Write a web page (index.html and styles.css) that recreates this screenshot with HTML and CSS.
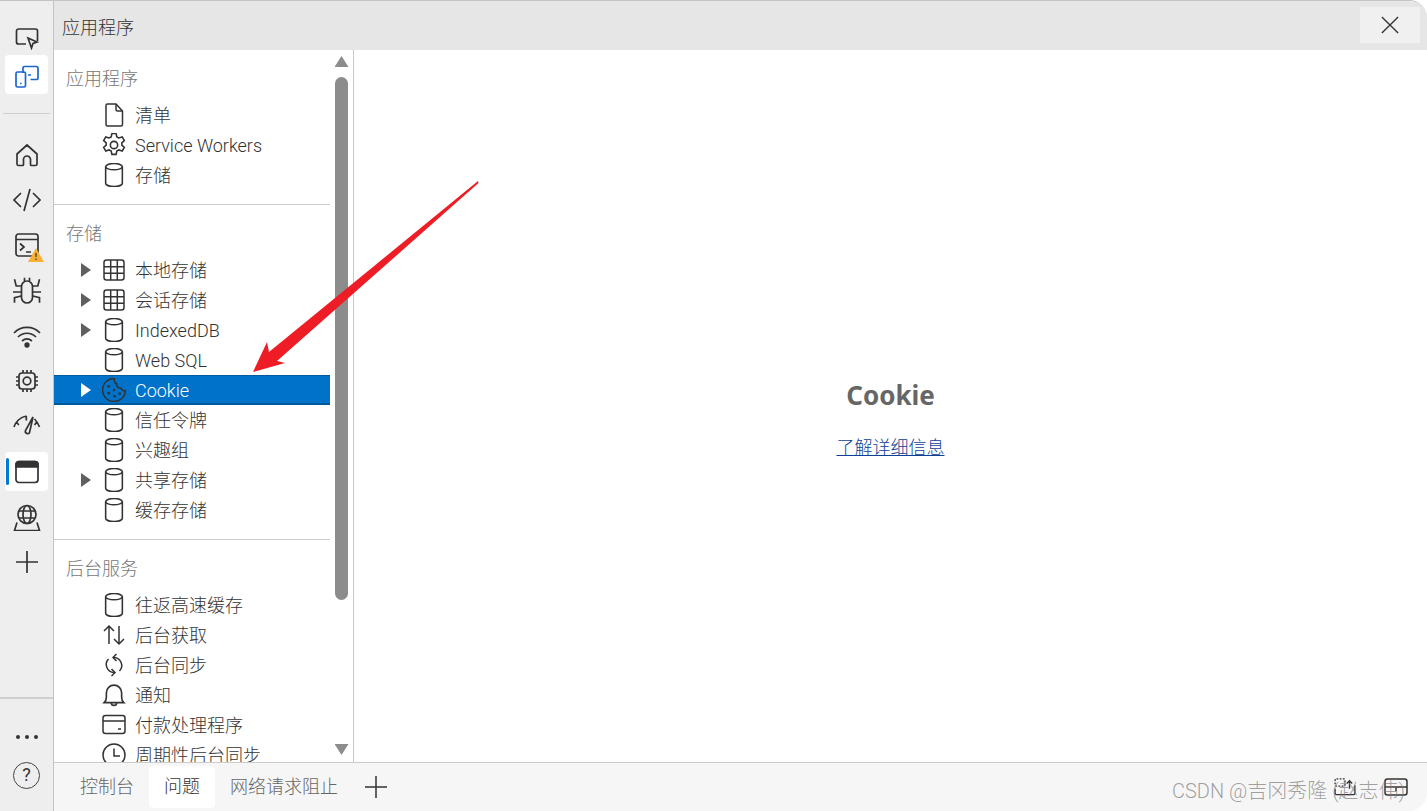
FILE: index.html
```html
<!DOCTYPE html>
<html lang="zh-CN">

<head>
    <meta charset="UTF-8">
    <title>应用程序</title>
    <link rel="stylesheet" href="styles.css">
</head>

<body>
    <svg class="defs" width="0" height="0">
        <symbol id="i-file" viewBox="0 0 24 24"><path d="M5.500 1h8.500l6.500 7v13.500a1.500 1.500 0 0 1-1.500 1.500h-13.500a1.500 1.500 0 0 1-1.500-1.500v-19a1.500 1.500 0 0 1 1.500-1.500z"/><path d="M14 1v5.500a1.500 1.500 0 0 0 1.500 1.500h5"/></symbol>
        <symbol id="i-gear" viewBox="0.500 0.500 23 23"><circle cx="12" cy="12" r="3.500"/><path d="M10 1h4l.7 3.200 2 1.100 3.200-1 2 3.400-2.400 2.200v2.200l2.400 2.200-2 3.400-3.200-1-2 1.100-.7 3.200h-4l-.7-3.200-2-1.100-3.200 1-2-3.400 2.400-2.200v-2.200l-2.400-2.200 2-3.400 3.200 1 2-1.100z"/></symbol>
        <symbol id="i-db" viewBox="0.500 0.500 23 23"><ellipse cx="12" cy="4" rx="8" ry="3"/><path d="M4 4v16c0 1.700 3.600 3 8 3s8-1.300 8-3v-16"/></symbol>
        <symbol id="i-grid" viewBox="0 0 24 24"><rect x="2" y="2" width="20" height="20" rx="2.500"/><path d="M8.700 2v20M15.300 2v20M2 8.700h20M2 15.300h20"/></symbol>
        <symbol id="i-cookie" viewBox="0.500 0.500 23 23"><path d="M12.500 1a11 11 0 1 0 10.500 11.500c-2.200.6-4-.5-4.500-2.500-2.500.3-4.300-1.400-4-4-1.800-.8-2.600-3-2-5z"/><g class="dots"><circle cx="7" cy="8.500" r="1.300"/><circle cx="12" cy="12" r="1.300"/><circle cx="7" cy="15" r="1.300"/><circle cx="12.500" cy="18" r="1.300"/><circle cx="17.500" cy="15.500" r="1.300"/></g></symbol>
        <symbol id="i-updown" viewBox="0 0 24 24"><path d="M7 21v-18M2 8l5-5 5 5M17 3v18M12 16l5 5 5-5"/></symbol>
        <symbol id="i-sync" viewBox="0 0 24 24"><path d="M12 4.500a8 8 0 0 1 5.500 13.500M12 19.500a8 8 0 0 1-5.500-13.500"/><path d="M14.500 1l-3.500 3.500 3.500 3.500M9.500 23l3.500-3.500-3.500-3.500"/></symbol>
        <symbol id="i-bell" viewBox="2 0.500 20 22"><path d="M3 18.500c1.500-1.500 2-3 2-5v-4a7 7 0 0 1 14 0v4c0 2 .5 3.500 2 5z"/><path d="M9.500 18.500a2.500 2.500 0 0 0 5 0"/></symbol>
        <symbol id="i-card" viewBox="0 0 24 24"><rect x="1" y="2.500" width="22" height="18" rx="2.500"/><path d="M1 8h22M16 16h3"/></symbol>
        <symbol id="i-clock" viewBox="0 0 24 24"><circle cx="12" cy="12" r="11"/><path d="M12 5.500v7.500h6"/></symbol>
    </svg>

    <div class="window">
        <!-- activity bar -->
        <nav class="activity">
            <div class="activity-top">
                <div class="tool">
                    <svg viewBox="0 0 24 24"><path d="M11 18h-7.500a2 2 0 0 1-2-2v-11a2 2 0 0 1 2-2h17a2 2 0 0 1 2 2v10"/><path d="M13 12l9 4-4 1.500-1.500 4.500z"/></svg>
                </div>
                <div class="tool tool-on">
                    <svg class="blue" viewBox="0 0 24 24"><path d="M8 9v-5a1.500 1.500 0 0 1 1.500-1.500h12a1.500 1.500 0 0 1 1.500 1.500v10a1.500 1.500 0 0 1-1.500 1.500h-6"/><path d="M13 11h3"/><rect x="1" y="8" width="9.500" height="15" rx="1.500"/><path d="M5 19.500h1.500"/></svg>
                </div>
            </div>
            <div class="tools">
                <div class="tool"><svg viewBox="0 0 24 24"><path d="M2 11l10-9 10 9v10a1.500 1.500 0 0 1-1.500 1.500h-4a1 1 0 0 1-1-1v-5a3.500 3.500 0 0 0-7 0v5a1 1 0 0 1-1 1h-4a1.500 1.500 0 0 1-1.500-1.500z"/></svg></div>
                <div class="tool"><svg class="wide" viewBox="0 0 28 24"><path d="M8 5l-7 7 7 7M20 5l7 7-7 7M17 1l-6 22"/></svg></div>
                <div class="tool console">
                    <svg viewBox="0 0 24 24"><rect x="1" y="1" width="22" height="22" rx="2.500"/><path d="M1 6.500h22M5 10.500l4 3.500-4 3.500M11 19h5"/></svg>
                    <svg class="warn" viewBox="0 0 16 14"><path d="M8 0l8 14h-16z"/><path class="warn-mark" d="M8 5v4M8 10.500v1.500"/></svg>
                </div>
                <div class="tool"><svg class="wide tall" viewBox="0 0 28 28"><rect x="8.500" y="4" width="11" height="22" rx="5.500"/><path d="M11.500 .7v3.300M16.500 .7v3.300M1.500 2.300l1.700 6.700h5.300M26.500 2.300l-1.700 6.700h-5.300M0 15h8.500M28 15h-8.500M1.500 25.700v-5l6.700-1.700M26.500 25.700v-5l-6.700-1.700"/></svg></div>
                <div class="tool"><svg class="wide" viewBox="0 0 28 24"><path d="M1 9c7-7.500 19-7.500 26 0M5 13c5-5 13-5 18 0M9 17c3-2.500 7-2.500 10 0"/><circle class="solid" cx="14" cy="21" r="1.800"/></svg></div>
                <div class="tool"><svg viewBox="0 0 24 24"><rect x="4" y="4" width="16" height="16" rx="3"/><circle cx="12" cy="12" r="3.800"/><path d="M8 1v3M12 1v3M16 1v3M8 20v3M12 20v3M16 20v3M1 8h3M1 12h3M1 16h3M20 8h3M20 12h3M20 16h3"/></svg></div>
                <div class="tool"><svg class="wide tall" viewBox="0 0 28 28"><path d="M1 15c1.500-5 6-10 12.500-11M26.500 15c-1-3-3-6-5-8M13.300 4v4.500M3.200 9.700l2.600 3.300M24 9.700l-2.500 3.300M20 5l-7.500 13.500a2.300 2.300 0 0 0 4 2.200z"/></svg></div>
                <div class="tool tool-on tool-mark">
                    <svg viewBox="0 0 24 24"><rect x="1" y="1.500" width="22" height="21" rx="3"/><path class="solid" d="M1 7v-2.500a3 3 0 0 1 3-3h16a3 3 0 0 1 3 3v2.500z"/></svg>
                </div>
                <div class="tool"><svg class="wide tall" viewBox="0 0 28 28"><circle cx="14" cy="11.500" r="9"/><ellipse cx="14" cy="11.500" rx="4" ry="9"/><path d="M6 8h16M6 15h16M4 19.500l-2.500 8h25l-2.500-8"/></svg></div>
                <div class="tool"><svg viewBox="0 0 24 24"><path d="M12 1v22M1 12h22"/></svg></div>
            </div>
            <div class="activity-bottom">
                <div class="more"><span></span><span></span><span></span></div>
                <div class="help">?</div>
            </div>
        </nav>

        <div class="panel">
            <header class="titlebar">
                <span>应用程序</span>
                <button class="close">
                    <svg viewBox="0 0 20 20"><path d="M1 1l18 18M19 1l-18 18"/></svg>
                </button>
            </header>

            <div class="content">
                <aside class="sidebar">
                    <div class="tree">
                        <section class="group">
                            <h2>应用程序</h2>
                            <div class="row"><i class="caret none"></i><svg class="icon"><use href="#i-file"/></svg><span class="zh">清单</span></div>
                            <div class="row"><i class="caret none"></i><svg class="icon"><use href="#i-gear"/></svg><span>Service Workers</span></div>
                            <div class="row"><i class="caret none"></i><svg class="icon"><use href="#i-db"/></svg><span class="zh">存储</span></div>
                        </section>
                        <section class="group">
                            <h2>存储</h2>
                            <div class="row"><i class="caret"></i><svg class="icon"><use href="#i-grid"/></svg><span class="zh">本地存储</span></div>
                            <div class="row"><i class="caret"></i><svg class="icon"><use href="#i-grid"/></svg><span class="zh">会话存储</span></div>
                            <div class="row"><i class="caret"></i><svg class="icon"><use href="#i-db"/></svg><span>IndexedDB</span></div>
                            <div class="row"><i class="caret none"></i><svg class="icon"><use href="#i-db"/></svg><span>Web SQL</span></div>
                            <div class="row selected"><i class="caret"></i><svg class="icon"><use href="#i-cookie"/></svg><span>Cookie</span></div>
                            <div class="row"><i class="caret none"></i><svg class="icon"><use href="#i-db"/></svg><span class="zh">信任令牌</span></div>
                            <div class="row"><i class="caret none"></i><svg class="icon"><use href="#i-db"/></svg><span class="zh">兴趣组</span></div>
                            <div class="row"><i class="caret"></i><svg class="icon"><use href="#i-db"/></svg><span class="zh">共享存储</span></div>
                            <div class="row"><i class="caret none"></i><svg class="icon"><use href="#i-db"/></svg><span class="zh">缓存存储</span></div>
                        </section>
                        <section class="group">
                            <h2>后台服务</h2>
                            <div class="row"><i class="caret none"></i><svg class="icon"><use href="#i-db"/></svg><span class="zh">往返高速缓存</span></div>
                            <div class="row"><i class="caret none"></i><svg class="icon"><use href="#i-updown"/></svg><span class="zh">后台获取</span></div>
                            <div class="row"><i class="caret none"></i><svg class="icon"><use href="#i-sync"/></svg><span class="zh">后台同步</span></div>
                            <div class="row"><i class="caret none"></i><svg class="icon"><use href="#i-bell"/></svg><span class="zh">通知</span></div>
                            <div class="row"><i class="caret none"></i><svg class="icon"><use href="#i-card"/></svg><span class="zh">付款处理程序</span></div>
                            <div class="row"><i class="caret none"></i><svg class="icon"><use href="#i-clock"/></svg><span class="zh">周期性后台同步</span></div>
                        </section>
                    </div>
                    <div class="scrollbar">
                        <i class="arrow-up"></i>
                        <div class="thumb-track"><div class="thumb"></div></div>
                        <i class="arrow-down"></i>
                    </div>
                </aside>

                <main class="view">
                    <h1>Cookie</h1>
                    <a href="#">了解详细信息</a>
                </main>
            </div>

            <footer class="drawer">
                <div class="tab">控制台</div>
                <div class="tab active">问题</div>
                <div class="tab">网络请求阻止</div>
                <svg class="add" viewBox="0 0 24 24"><path d="M12 1v22M1 12h22"/></svg>
                <div class="drawer-tools">
                    <svg class="move" viewBox="0 0 24 20"><rect class="dashed" x="1" y="1" width="11" height="8" rx="1.500"/><path d="M1 12v5a1.500 1.500 0 0 0 1.500 1.500h19a1.500 1.500 0 0 0 1.500-1.500v-9M17 12v-9M14 6l3-3 3 3"/></svg>
                    <svg class="dock" viewBox="0 0 24 18"><rect x="1" y="1" width="22" height="16" rx="2.500"/><path d="M1 9h22M12 9v4"/></svg>
                </div>
            </footer>
        </div>
    </div>

    <!-- screenshot annotations -->
    <svg class="annotation" viewBox="0 0 1427 811"><polygon points="478,181 478.500,183 277,361 285,363 253,372 267,342 269,352"/></svg>
    <div class="watermark">CSDN @吉冈秀隆 (赵志伟)</div>
</body>

</html>
```

FILE: styles.css
```css
* {
    margin: 0;
    padding: 0;
    box-sizing: border-box;
}

html,
body {
    height: 100%;
    overflow: hidden;
}

body {
    font-family: 'Roboto', 'Noto Sans CJK SC', sans-serif;
    font-weight: 300;
    font-size: 18px;
    background: white;
    color: #333;
}

.defs {
    position: absolute;
}

svg {
    fill: none;
    stroke: #333;
    stroke-width: 1.5;
}

.window {
    display: flex;
    height: 811px;
    border-top: 1px solid #c4c4c4;
    border-radius: 0 18px 18px 0;
    overflow: hidden;
}

/* Activity bar */
.activity {
    display: flex;
    flex-direction: column;
    width: 54px;
    flex-shrink: 0;
    background: #eeeeee;
    border-right: 1px solid #c4c4c4;
}

.activity-top {
    padding-top: 18px;
    padding-bottom: 18px;
    border-bottom: 1px solid #cfcfcf;
    margin: 0 3px;
}

.activity-top .tool {
    margin: 0 -3px;
    height: 38px;
}

.activity-top .tool-on::before {
    top: -2px;
    bottom: 1px;
}

.tools {
    padding-top: 18px;
}

.tool {
    position: relative;
    display: flex;
    align-items: center;
    justify-content: center;
    height: 45.300px;
    width: 53px;
}

.tool svg {
    width: 24px;
    height: 24px;
    stroke-width: 1.700;
}

.tool svg.wide {
    width: 28px;
}

.tool svg.tall {
    height: 28px;
}

.tool-on::before {
    content: "";
    position: absolute;
    left: 5px;
    right: 5px;
    top: 3px;
    bottom: 3px;
    background: white;
    border-radius: 4px;
}

.tool-on svg {
    position: relative;
}

.tool-mark::after {
    content: "";
    position: absolute;
    left: 6px;
    top: 9px;
    width: 3px;
    height: 27px;
    background: #0078d4;
    border-radius: 2px;
}

.blue {
    stroke: #1a66d0;
}

.solid {
    fill: #333;
}

.warn {
    position: absolute;
    left: 28px;
    top: 25px;
    stroke: none;
}

.tool .warn {
    width: 16px;
    height: 14px;
}

.warn path {
    fill: #fbb034;
    stroke: none;
}

.warn .warn-mark {
    fill: none;
    stroke: #333;
    stroke-width: 1.200;
}

.activity-bottom {
    margin-top: auto;
    margin-left: 0;
    height: 114px;
    border-top: 2px solid #cfcfcf;
    display: flex;
    flex-direction: column;
    align-items: center;
}

.more {
    display: flex;
    gap: 5px;
    margin-top: 36px;
}

.more span {
    width: 4px;
    height: 4px;
    border-radius: 50%;
    background: #333;
}

.help {
    width: 27px;
    height: 27px;
    margin-top: 23px;
    border: 1.500px solid #444;
    border-radius: 50%;
    font-size: 18px;
    font-weight: 400;
    line-height: 24px;
    text-align: center;
}

/* Panel */
.panel {
    flex: 1;
    display: flex;
    flex-direction: column;
    min-width: 0;
}

.titlebar {
    display: flex;
    align-items: center;
    justify-content: space-between;
    height: 49px;
    flex-shrink: 0;
    padding: 0 7px 0 8px;
    background: #e6e6e6;
}

.close {
    display: flex;
    align-items: center;
    justify-content: center;
    width: 60px;
    height: 36px;
    margin-bottom: 1px;
    background: #f0f0f0;
    border: none;
}

.close svg {
    width: 18px;
    height: 18px;
}

.content {
    flex: 1;
    display: flex;
    min-height: 0;
}

/* Sidebar tree */
.sidebar {
    display: flex;
    width: 300px;
    flex-shrink: 0;
    border-right: 1px solid #c8c8c8;
}

.tree {
    width: 276px;
    overflow: hidden;
}

.group {
    padding-top: 13px;
    padding-bottom: 14px;
    border-bottom: 1px solid #cccccc;
}

.group:last-child {
    border-bottom: none;
}

.group h2 {
    height: 30px;
    margin-bottom: 7px;
    padding-left: 12px;
    font-size: 18px;
    font-weight: 300;
    line-height: 32px;
    color: #777;
}

.row {
    display: flex;
    align-items: center;
    height: 30px;
    padding-left: 26px;
    white-space: nowrap;
}

.zh {
    margin-bottom: 2px;
}

.caret {
    width: 22px;
    height: 14px;
    flex-shrink: 0;
    background: #5f5f5f;
    clip-path: polygon(1px 0, 11px 50%, 1px 14px);
}

.caret.none {
    visibility: hidden;
}

.icon {
    width: 24px;
    height: 24px;
    flex-shrink: 0;
    margin-right: 9px;
}

.selected {
    color: white;
    background: #0072c9;
    box-shadow: inset 0 1px 0 #005a9e, inset 0 -2px 0 #005a9e;
}

.selected .caret {
    background: white;
}

.dots circle {
    fill: #333;
    stroke: none;
}

/* Scrollbar */
.scrollbar {
    flex: 1;
    display: flex;
    flex-direction: column;
    align-items: center;
    padding-top: 6px;
    padding-bottom: 7px;
}

.arrow-up,
.arrow-down {
    width: 14px;
    height: 11px;
    flex-shrink: 0;
    background: #8c8c8c;
}

.arrow-up {
    clip-path: polygon(50% 0, 100% 100%, 0 100%);
}

.arrow-down {
    clip-path: polygon(0 0, 100% 0, 50% 100%);
}

.thumb-track {
    flex: 1;
    padding-top: 10px;
}

.thumb {
    width: 13px;
    height: 523px;
    background: #8c8c8c;
    border-radius: 7px;
}

/* Main view */
.view {
    flex: 1;
    display: flex;
    flex-direction: column;
    align-items: center;
    justify-content: center;
    gap: 21px;
    padding-top: 26px;
}

.view h1 {
    font-family: 'Noto Sans', sans-serif;
    font-size: 26px;
    font-weight: 700;
    line-height: 36px;
    color: #666;
}

.view a {
    line-height: 27px;
    color: #0f3f95;
}

/* Drawer tabs */
.drawer {
    display: flex;
    align-items: center;
    height: 49px;
    flex-shrink: 0;
    padding-left: 11px;
    background: #f6f6f6;
    border-top: 1px solid #cccccc;
}

.tab {
    height: 42px;
    padding: 0 15px;
    line-height: 42px;
    color: #666;
}

.tab.active {
    color: #333;
    background: white;
    border-radius: 4px;
}

.add {
    width: 24px;
    height: 24px;
    margin-left: 11px;
}

.drawer-tools {
    display: flex;
    align-items: center;
    gap: 28px;
    margin-left: auto;
    margin-right: 19px;
}

.move {
    width: 22px;
    height: 18px;
}

.dock {
    width: 24px;
    height: 18px;
}

.dashed {
    stroke-dasharray: 2 1.500;
}

/* Annotations on top of the screenshot */
.annotation {
    position: absolute;
    left: 0;
    top: 0;
    width: 1427px;
    height: 811px;
    stroke: none;
    pointer-events: none;
}

.annotation polygon {
    fill: #ee1c25;
}

.watermark {
    position: absolute;
    left: 1172px;
    top: 778px;
    font-size: 20px;
    line-height: 26px;
    white-space: nowrap;
    color: rgba(120, 120, 120, 0.7);
}
```
